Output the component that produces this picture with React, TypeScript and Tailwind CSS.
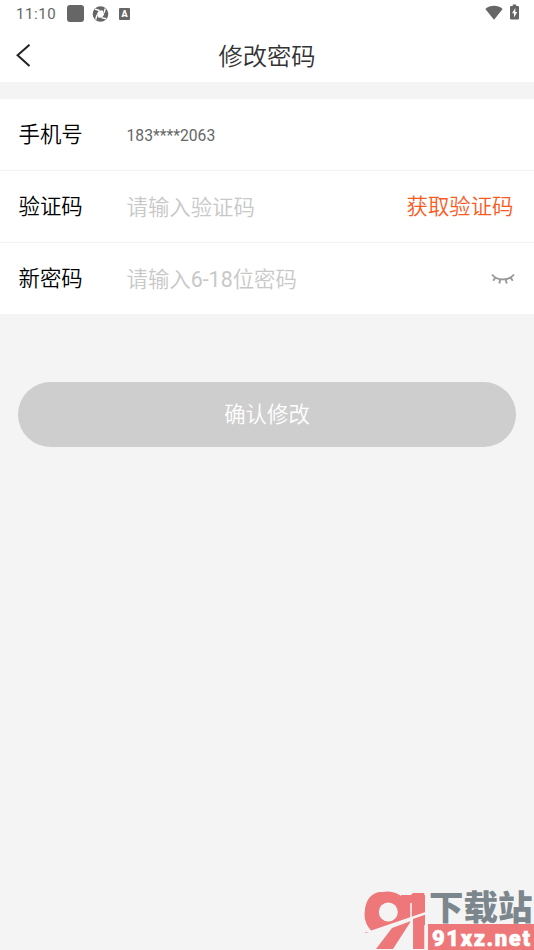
import React, { useState } from 'react';

const StatusBar: React.FC = () => (
  <div className="flex h-7 items-center justify-between pl-4 pr-[15px] text-[#666]">
    <div className="flex items-center">
      <span className="w-[51px] text-[15px] leading-7 tracking-[0.6px]">11:10</span>
      <span className="mb-px h-[17px] w-[17px] rounded-[3px] bg-[#666]" />
      <svg className="mb-px ml-2" width="17" height="16" viewBox="0 0 17 16">
        <circle cx="8.5" cy="8" r="7.8" fill="#666" />
        <path d="M6.8 4.8 L10.5 4.3 L12.2 8.5 L10 11.5 L6.5 11.7 L4.8 8 Z" fill="#fff" />
        <path d="M7.5 4.5 L3 3.2 M12 7 L13.3 2.5 M9.5 11.6 L14 12.8 M5 9 L3.7 13.5" stroke="#fff" strokeWidth="1.4" />
      </svg>
      <span className="ml-2.5 flex h-3 w-[11px] items-center justify-center rounded-[1px] bg-[#666] text-[9px] font-black leading-none text-white">
        A
      </span>
    </div>
    <div className="flex items-center gap-[7px] pb-1">
      <svg width="18" height="15" viewBox="0 0 18 15">
        <path d="M0.3 4 C5.3 -0.3 12.7 -0.3 17.7 4 L9 14.8 Z" fill="#666" />
      </svg>
      <svg width="9" height="16" viewBox="0 0 9 16">
        <path d="M2.8 0.5 H6.2 V2 H8 Q9 2 9 3 V14.5 Q9 15.5 8 15.5 H1 Q0 15.5 0 14.5 V3 Q0 2 1 2 H2.8 Z" fill="#666" />
        <path d="M5.3 4 L2 9.3 H4 V13.5 L7.2 8 H5.3 Z" fill="#fff" />
      </svg>
    </div>
  </div>
);

const Header: React.FC = () => (
  <header className="relative flex h-[54px] items-center justify-center">
    <button className="absolute left-4 top-4" aria-label="返回">
      <svg width="15" height="23" viewBox="0 0 15 23" fill="none" stroke="#222" strokeWidth="2">
        <path d="M13.5 0.8 L1.6 11.3 L13.5 22" />
      </svg>
    </button>
    <h1 className="pt-[3px] text-[24.3px] font-[350] leading-[51px] text-[#333]">修改密码</h1>
  </header>
);

const ClosedEye: React.FC = () => (
  <svg width="24" height="12" viewBox="0 0 24 12" fill="none" stroke="#999" strokeWidth="1.9">
    <path d="M1 1.5 C6 8 18 8 23 1.5 M4.3 4.6 L2.3 7.8 M9.3 6.5 L8.3 10.5 M14.7 6.5 L15.7 10.5 M19.7 4.6 L21.7 7.8" />
  </svg>
);

interface RowProps {
  label: string;
  last?: boolean;
  children: React.ReactNode;
}

const Row: React.FC<RowProps> = ({ label, last, children }) => (
  <div className={`flex items-center pl-[18.5px] pr-[19.5px] ${last ? 'h-[71px]' : 'h-[72px] border-b border-[#f2f2f2]'}`}>
    <span className="w-[108px] shrink-0 pt-px text-[21.4px] font-[350] leading-8 text-black">{label}</span>
    {children}
  </div>
);

const inputClass =
  "min-w-0 flex-1 bg-transparent pt-[3px] font-[Roboto,'Noto_Sans_CJK_SC_DemiLight','Noto_Sans_CJK_SC',sans-serif] text-[21.4px] leading-8 text-[#333] outline-none placeholder:text-[#c8c8c8]";

// Site mark shown in the bottom right corner
const SiteMark: React.FC = () => (
  <div className="absolute bottom-0 right-0 flex h-[60px] w-[171px]">
    <svg width="65" height="60" viewBox="0 0 65 60" className="shrink-0">
      <text x="0" y="59" textLength="64" lengthAdjust="spacingAndGlyphs" fill="#ee7779" fontFamily="Inter" fontWeight="900" fontSize="77">91</text>
      <circle cx="24.5" cy="24.5" r="23" fill="#ee7779" />
      <rect x="38" y="5" width="24" height="30" fill="#ee7779" />
      <circle cx="25.3" cy="22" r="9.5" fill="#f4f4f4" />
      {/* lower half is cut away along the slash, then the tail is laid over it */}
      <path d="M0 44 L50 27 V60 H0 Z" fill="#f4f4f4" />
      <path d="M29 38 L48 31 L30 59 H13 Z" fill="#ee7779" />
      <path d="M48 13 V32" stroke="#f4f4f4" strokeWidth="1.5" />
      <path d="M8 42 L65 22.5" stroke="#f4f4f4" strokeWidth="2.4" />
    </svg>
    <div className="flex flex-1 flex-col">
      <span className="-mt-0.5 h-9 whitespace-nowrap pl-px font-['Noto_Sans_CJK_SC'] text-[34.5px] font-black leading-[34px] text-[#7b868d]">
        下载站
      </span>
      <div className="flex h-[26px] items-end bg-[#ee7779]">
        <svg width="106" height="26" viewBox="0 0 106 26">
          <text x="4" y="21.5" textLength="98" lengthAdjust="spacing" fill="#fff" stroke="#fff" strokeWidth="0.6" fontFamily="Roboto" fontWeight="900" fontSize="22">
            91xz.net
          </text>
        </svg>
      </div>
    </div>
  </div>
);

const App: React.FC = () => {
  const [code, setCode] = useState('');
  const [password, setPassword] = useState('');

  return (
    <div className="relative h-[950px] w-[534px] overflow-hidden bg-[#f4f4f4] font-[Roboto,'Noto_Sans_CJK_SC',sans-serif]">
      <div className="bg-white">
        <StatusBar />
        <Header />
      </div>

      <div className="mt-[17px] bg-white">
        <Row label="手机号">
          <span className="pt-0.5 text-[15.7px] text-[#666]">183****2063</span>
        </Row>
        <Row label="验证码">
          <input className={inputClass} placeholder="请输入验证码" value={code} onChange={(e) => setCode(e.target.value)} />
          <button className="mr-px text-[21.4px] font-[350] leading-8 text-[#fa5a1e]">获取验证码</button>
        </Row>
        <Row label="新密码" last>
          <input
            className={inputClass}
            type="password"
            placeholder="请输入6-18位密码"
            value={password}
            onChange={(e) => setPassword(e.target.value)}
          />
          <button aria-label="显示密码">
            <ClosedEye />
          </button>
        </Row>
      </div>

      <div className="px-[18px] pt-[68px]">
        <button className="h-[65px] w-full rounded-full bg-[#cecece] pt-0.5 text-[21.4px] font-[350] text-white">确认修改</button>
      </div>

      <SiteMark />
    </div>
  );
};

export default App;
